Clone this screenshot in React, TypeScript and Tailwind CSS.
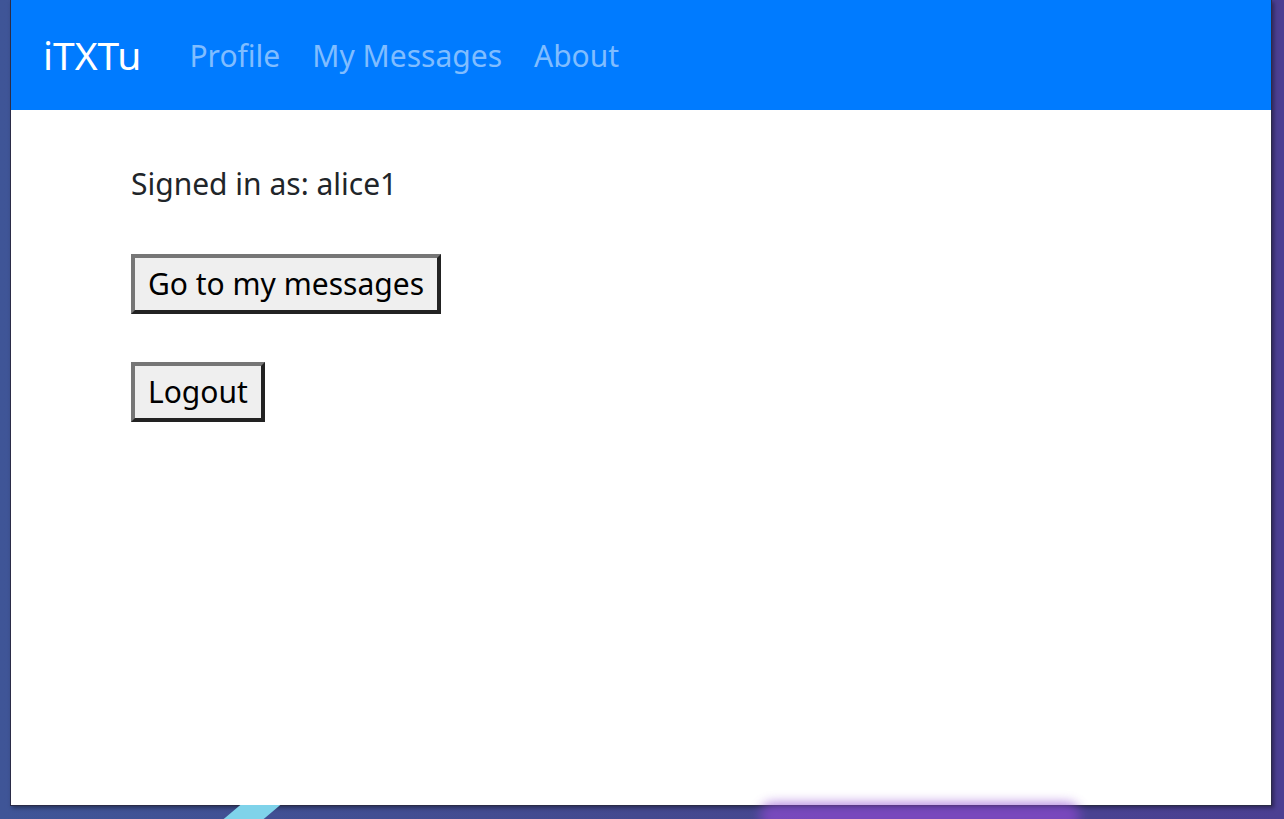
export default function App() {
  return (
    <div className="relative h-[819px] w-full overflow-hidden bg-[linear-gradient(90deg,#3f5597_0%,#44498f_50%,#4b3f92_100%)]">
      <div className="absolute bottom-0 left-[232px] h-[14px] w-[40px] -skew-x-[50deg] bg-[#7fd3ea]" />
      <div className="absolute -bottom-[10px] left-[760px] h-[26px] w-[320px] rounded-full bg-[#8e4ad0] opacity-70 blur-[6px]" />
      <div className="flex h-[806px] w-[1262px] ml-[10px] flex-col border border-t-0 border-[#2b2c48] bg-white shadow-[2px_2px_4px_rgba(0,0,0,0.4)] font-['Noto_Sans',sans-serif]">
        <nav className="flex h-[110px] shrink-0 items-center bg-[#007bff] pl-[32px]">
          <span className="text-[39px] text-white">iTXTu</span>
          <div className="ml-[48px] flex gap-[32px] text-[30px] text-[#80bdff]">
            <span>Profile</span>
            <span>My Messages</span>
            <span>About</span>
          </div>
        </nav>
        <main className="flex flex-col items-start pl-[120px] pt-[56px] text-[30px] leading-[1.2] text-[#212529]">
          <p>Signed in as: alice1</p>
          <button className="mt-[52px] h-[60px] border-4 border-t-[#767676] border-l-[#767676] border-b-[#222222] border-r-[#222222] bg-[#efefef] px-[13px] text-black">
            Go to my messages
          </button>
          <button className="mt-[48px] h-[60px] border-4 border-t-[#767676] border-l-[#767676] border-b-[#222222] border-r-[#222222] bg-[#efefef] px-[13px] text-black">
            Logout
          </button>
        </main>
      </div>
    </div>
  );
}
